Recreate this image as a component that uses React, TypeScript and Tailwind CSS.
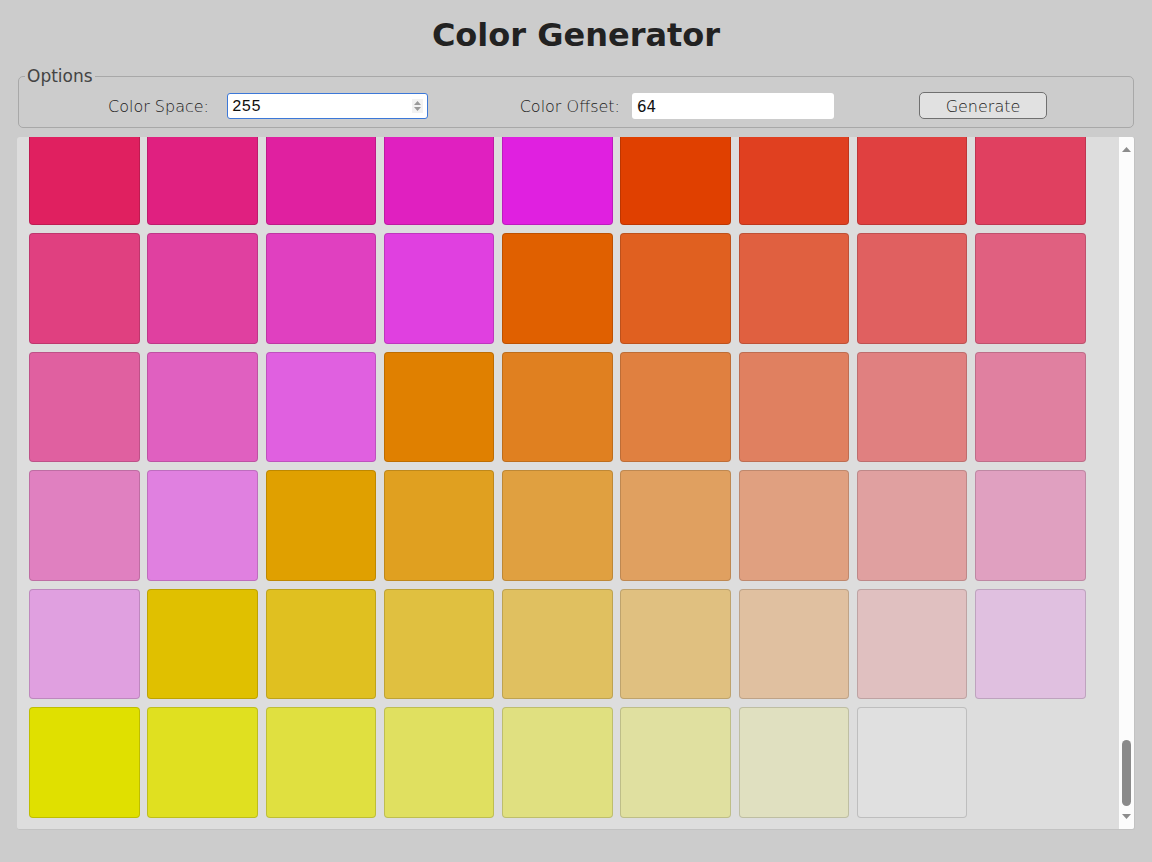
import { useLayoutEffect, useRef } from "react";

// colour table: 8 steps per channel, r outermost
const swatches: string[] = [];
for (let i = 0; i < 512; i++) {
  const r = (i >> 6) * 32;
  const g = ((i >> 3) & 7) * 32;
  const b = (i & 7) * 32;
  swatches.push(`rgb(${r}, ${g}, ${b})`);
}

function SpinArrows() {
  return (
    <div className="flex h-[14px] w-[11px] flex-col items-center justify-center gap-[2px] bg-[#f2f2f2]">
      <svg width="7" height="4" viewBox="0 0 7 4">
        <path d="M3.5 0 L7 4 L0 4 Z" fill="#9a9a9a" />
      </svg>
      <svg width="7" height="4" viewBox="0 0 7 4">
        <path d="M0 0 L7 0 L3.5 4 Z" fill="#9a9a9a" />
      </svg>
    </div>
  );
}

function ScrollBar() {
  return (
    <div className="flex w-[15px] shrink-0 flex-col items-center bg-[#fcfcfc] pr-[1px]">
      <svg className="mt-[10px]" width="9" height="5" viewBox="0 0 9 5">
        <path d="M4.5 0 L9 5 L0 5 Z" fill="#8c8c8c" />
      </svg>
      <div className="flex-1" />
      <div className="h-[66px] w-[9px] rounded-full bg-[#8a8a8a]" />
      <svg className="mb-[10px] mt-[8px]" width="9" height="5" viewBox="0 0 9 5">
        <path d="M0 0 L9 0 L4.5 5 Z" fill="#8c8c8c" />
      </svg>
    </div>
  );
}

const thin =
  "font-['DejaVu_Sans_ExtraLight','DejaVu_Sans',sans-serif] font-extralight text-[16px] text-[#1a1a1a]";

export default function App() {
  const listRef = useRef<HTMLDivElement>(null);

  useLayoutEffect(() => {
    if (listRef.current) {
      listRef.current.scrollTop = listRef.current.scrollHeight;
    }
  }, []);

  return (
    <div className="flex h-screen flex-col bg-[#cccccc] pb-[32px] font-['DejaVu_Sans',sans-serif] text-[#222]">
      <h1 className="mt-[17px] text-center text-[32px] font-bold leading-[37px] text-[#222]">
        Color Generator
      </h1>

      <fieldset className="mx-[18px] mt-[13px] rounded-[5px] border border-[#a8a8a8] pb-[8px] pt-[6px]">
        <legend className="ml-[6px] px-[2px] text-[17px] leading-[19px] text-[#444]">
          Options
        </legend>
        <div className="flex h-[27px] items-center pl-[88px]">
          <span className={`w-[102px] pt-[3px] text-right ${thin}`}>Color Space:</span>
          <div className="ml-[18px] flex h-[26px] w-[201px] items-center justify-between rounded-[3px] border border-[#3c78d8] bg-white pl-[4px] pr-[4px]">
            <span className="pt-[3px] font-['Liberation_Mono',monospace] text-[16px] text-[#111]">
              255
            </span>
            <SpinArrows />
          </div>
          <span className={`ml-[86px] w-[106px] pt-[3px] text-right ${thin}`}>
            Color Offset:
          </span>
          <div className="ml-[12px] flex h-[26px] w-[202px] items-center rounded-[3px] bg-white pl-[5px]">
            <span className="pt-[3px] text-[15px] text-[#111]">64</span>
          </div>
          <button
            type="button"
            className={`ml-[85px] h-[27px] w-[128px] rounded-[5px] border border-[#707070] bg-[#e1e1e1] pt-[2px] ${thin}`}
          >
            Generate
          </button>
        </div>
      </fieldset>

      <div className="mx-[17px] mt-[9px] flex min-h-0 flex-1 overflow-hidden rounded-[3px] border-b border-r border-[#c2c2c2] bg-[#dddddd]">
        <div
          ref={listRef}
          className="min-w-0 flex-1 overflow-y-auto [scrollbar-width:none]"
        >
          <div className="grid grid-cols-[repeat(9,110.5px)] gap-x-[7.75px] gap-y-[8px] pb-[11px] pl-[12px] pt-[12px]">
            {swatches.map((c, i) => (
              <div
                key={i}
                className="h-[110.5px] w-[110.5px] rounded-[4px] border border-black/15"
                style={{ backgroundColor: c }}
              />
            ))}
          </div>
        </div>
        <ScrollBar />
      </div>
    </div>
  );
}
